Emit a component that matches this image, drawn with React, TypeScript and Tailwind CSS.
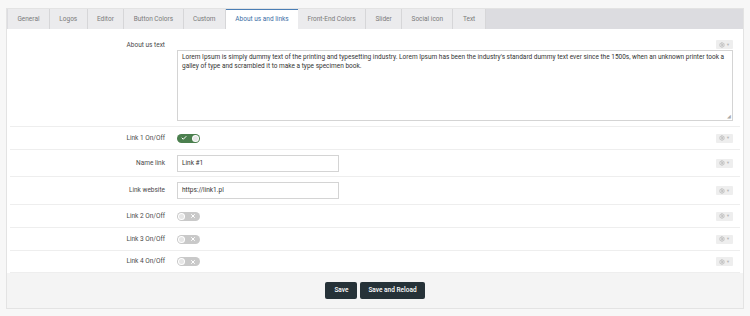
import React from "react";
import { Settings, Check, X } from "lucide-react";

const tabs = [
  "General",
  "Logos",
  "Editor",
  "Button Colors",
  "Custom",
  "About us and links",
  "Front-End Colors",
  "Slider",
  "Social icon",
  "Text",
];

const lorem =
  "Lorem Ipsum is simply dummy text of the printing and typesetting industry. Lorem Ipsum has been the industry's standard dummy text ever since the 1500s, when an unknown printer took a galley of type and scrambled it to make a type specimen book.";

function GearButton() {
  return (
    <div className="flex h-[9px] w-[17px] items-center justify-center gap-[1px] rounded-[1px] bg-[#eeeeee] text-[#b8b8b8]">
      <Settings size={6} strokeWidth={3} />
      <span className="text-[4px] leading-none">▼</span>
    </div>
  );
}

function Toggle({ on }: { on: boolean }) {
  if (on) {
    return (
      <div className="flex h-[9px] w-[23px] items-center justify-between rounded-full bg-[#4b7f4e] pl-[4px] pr-[1px]">
        <Check size={6} strokeWidth={4} className="text-white" />
        <div className="flex h-[7px] w-[7px] items-center justify-center rounded-full bg-white">
          <div className="h-[5px] w-[5px] rounded-full bg-[#e6e6e6]" />
        </div>
      </div>
    );
  }
  return (
    <div className="flex h-[9px] w-[23px] items-center justify-between rounded-full bg-[#c9c9c9] pl-[1px] pr-[4px]">
      <div className="flex h-[7px] w-[7px] items-center justify-center rounded-full bg-white">
        <div className="h-[5px] w-[5px] rounded-full bg-[#e6e6e6]" />
      </div>
      <X size={6} strokeWidth={4} className="text-white" />
    </div>
  );
}

function Row({
  label,
  children,
  h,
}: {
  label: string;
  children: React.ReactNode;
  h: string;
}) {
  return (
    <div className={`flex items-center border-b border-[#eeeeee] ${h}`}>
      <div className="w-[156px] pr-[1px] text-right text-[#4a4a4a]">{label}</div>
      <div className="ml-[11px] flex-1">{children}</div>
      <div className="mr-[7px]">
        <GearButton />
      </div>
    </div>
  );
}

function TextInput({ value }: { value: string }) {
  return (
    <div className="flex h-[17px] w-[162px] items-center border border-[#d4d4d4] bg-white px-[4px] text-[#333333]">
      {value}
    </div>
  );
}

export default function App() {
  return (
    <div className="min-h-[316px] bg-[#f7f7f7] px-[6px] pt-[8px] font-['Roboto',sans-serif] text-[6.5px] leading-[9px]">
      <div className="border border-[#e3e3e3] bg-white">
        {/* Tabs */}
        <div className="flex h-[20px] bg-[#dcdce0] pl-[1px]">
          {tabs.map((t) => {
            const active = t === "About us and links";
            return (
              <div
                key={t}
                className={
                  active
                    ? "flex items-center border-t border-[#4a7eb5] bg-white px-[9.4px] text-[#3b6ea5]"
                    : "flex items-center border-r border-[#d6d6d8] bg-[#ebebed] px-[9.4px] text-[#7a7a7a]"
                }
              >
                {t}
              </div>
            );
          })}
        </div>

        {/* Rows */}
        <div className="px-[3px] pt-[7px]">
          <div className="flex border-b border-[#eeeeee] pb-[5px]">
            <div className="w-[156px] pr-[1px] pt-[5px] text-right text-[#4a4a4a]">
              About us text
            </div>
            <div className="ml-[11px] mr-[7px] flex flex-1 flex-col">
              <div className="flex justify-end pt-[4px]">
                <GearButton />
              </div>
              <div className="relative mt-[1px] h-[71px] border border-[#d4d4d4] px-[4px] pt-[2px] text-[#333333]">
                {lorem}
                <div className="absolute bottom-[1px] right-[1px] text-[5px] leading-none text-[#aaaaaa]">◢</div>
              </div>
            </div>
          </div>
          <Row label="Link 1 On/Off" h="h-[23px]">
            <Toggle on />
          </Row>
          <Row label="Name link" h="h-[27px]">
            <TextInput value="Link #1" />
          </Row>
          <Row label="Link website" h="h-[28px]">
            <TextInput value="https://link1.pl" />
          </Row>
          <Row label="Link 2 On/Off" h="h-[23px]">
            <Toggle on={false} />
          </Row>
          <Row label="Link 3 On/Off" h="h-[23px]">
            <Toggle on={false} />
          </Row>
          <Row label="Link 4 On/Off" h="h-[22px]">
            <Toggle on={false} />
          </Row>
        </div>

        {/* Footer */}
        <div className="flex h-[35px] items-center justify-center gap-[3px] bg-[#f4f4f4]">
          <button className="flex h-[17px] items-center rounded-[2px] bg-[#263238] px-[9px] text-[6.5px] font-medium text-white">
            Save
          </button>
          <button className="flex h-[17px] items-center rounded-[2px] bg-[#263238] px-[8px] text-[6.5px] font-medium text-white">
            Save and Reload
          </button>
        </div>
      </div>
    </div>
  );
}
